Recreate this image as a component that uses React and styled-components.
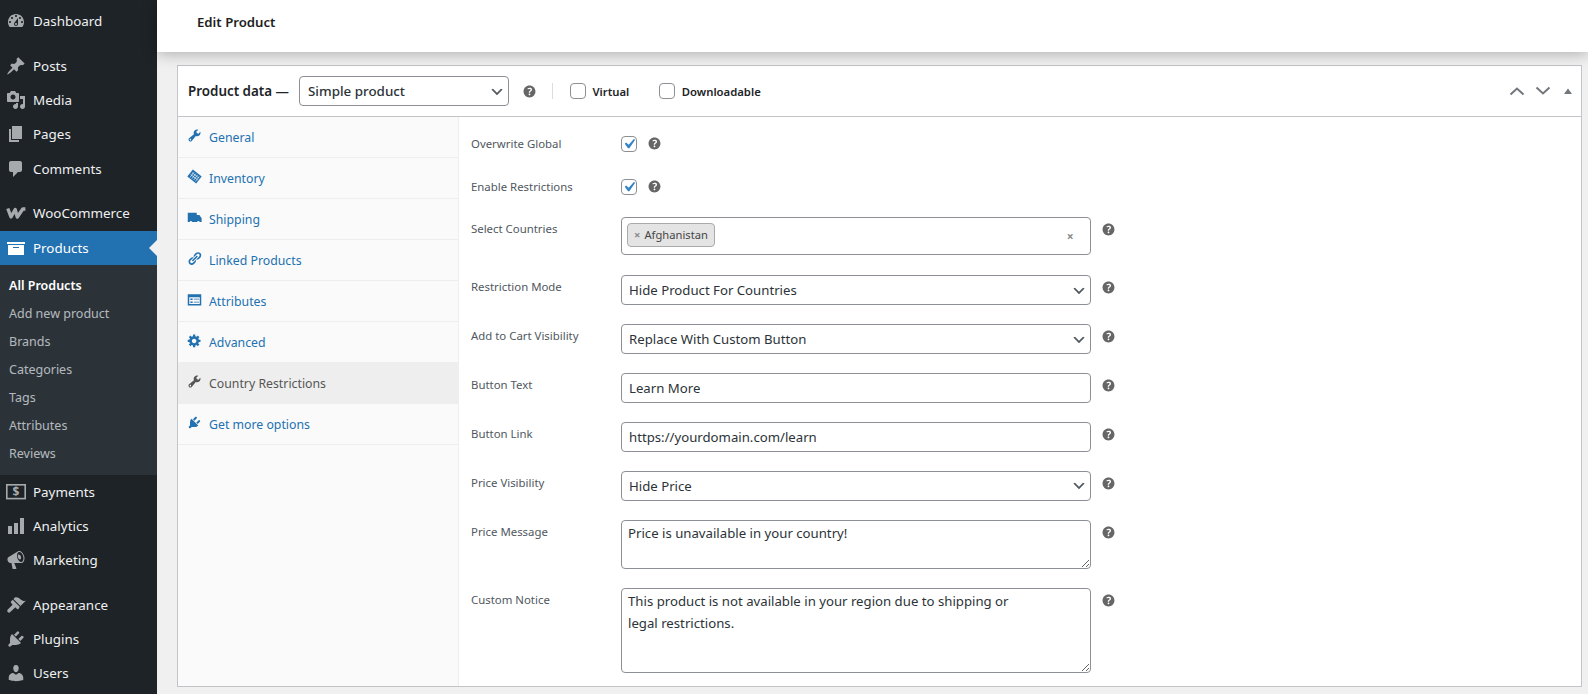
import styled, { createGlobalStyle } from "styled-components";

const GlobalStyle = createGlobalStyle`
  html, body {
    margin: 0;
    height: 100%;
    overflow: hidden;
    background: #f0f0f1;
    font-family: "Noto Sans", "Open Sans", sans-serif;
  }
  * {
    box-sizing: border-box;
  }
`;

const paths = {
  dashboard:
    "M3.76 16h12.48c1.1-1.37 1.76-3.11 1.76-5 0-4.42-3.58-8-8-8s-8 3.58-8 8c0 1.89.66 3.63 1.76 5zM10 4c.55 0 1 .45 1 1s-.45 1-1 1-1-.45-1-1 .45-1 1-1zM6 6c.55 0 1 .45 1 1s-.45 1-1 1-1-.45-1-1 .45-1 1-1zm8 0c.55 0 1 .45 1 1s-.45 1-1 1-1-.45-1-1 .45-1 1-1zm-5.37 5.55L12 7v6c0 1.1-.9 2-2 2s-2-.9-2-2c0-.57.24-1.08.63-1.45zM4 10c.55 0 1 .45 1 1s-.45 1-1 1-1-.45-1-1 .45-1 1-1zm12 0c.55 0 1 .45 1 1s-.45 1-1 1-1-.45-1-1 .45-1 1-1zm-5 3c0-.55-.45-1-1-1s-1 .45-1 1 .45 1 1 1 1-.45 1-1z",
  post: "M10.44 3.02l1.82-1.82 6.36 6.35-1.83 1.82c-1.05-.68-2.48-.57-3.41.36l-.75.75c-.92.93-1.04 2.35-.35 3.41l-1.83 1.82-2.41-2.41-2.8 2.79c-.42.42-3.38 2.71-3.8 2.29s1.86-3.39 2.28-3.81l2.79-2.79L4.1 9.36l1.83-1.82c1.05.69 2.48.57 3.4-.36l.75-.75c.93-.92 1.05-2.35.36-3.41z",
  media:
    "M13 11V4c0-.55-.45-1-1-1h-1.67L9 1H5L3.67 3H2c-.55 0-1 .45-1 1v7c0 .55.45 1 1 1h10c.55 0 1-.45 1-1zM7 4.5c1.38 0 2.5 1.12 2.5 2.5S8.38 9.5 7 9.5 4.5 8.38 4.5 7 5.62 4.5 7 4.5zM14 6h5v10.5c0 1.38-1.12 2.5-2.5 2.5S14 17.88 14 16.5s1.12-2.5 2.5-2.5c.17 0 .34.02.5.05V9h-3V6zm-4 8.05V13h2v3.5c0 1.38-1.12 2.5-2.5 2.5S7 17.88 7 16.5 8.12 14 9.5 14c.17 0 .34.02.5.05z",
  page: "M6 15V2h10v13H6zm-1 1h8v2H3V5h2v11z",
  comments: "M5 2h9c1.1 0 2 .9 2 2v7c0 1.1-.9 2-2 2h-2l-5 5v-5H5c-1.1 0-2-.9-2-2V4c0-1.1.9-2 2-2z",
  archive: "M19 4v2H1V4h18zM2 7h16v10H2V7zm11 3V9H7v1h6z",
  analytics: "M18 18V2h-4v16h4zm-6 0V7H8v11h4zm-6 0v-8H2v8h4z",
  megaphone:
    "M18.15 5.94c.46 1.62.38 3.22-.02 4.48-.42 1.28-1.26 2.18-2.3 2.48-.16.06-.26.06-.4.06-.06.02-.12.02-.18.02-.06.02-.14.02-.22.02h-6.8l2.22 5.5c.02.14-.06.26-.14.34-.08.1-.24.16-.34.16H6.95c-.1 0-.26-.06-.34-.16-.08-.08-.16-.2-.14-.34l-1-5.5H4.25l-.02-.02c-.5.06-1.08-.18-1.54-.62s-.88-1.08-1.06-1.88c-.24-.8-.2-1.56-.02-2.2.18-.62.58-1.08 1.06-1.3l.02-.02 9-5.4c.1-.06.18-.1.24-.16.06-.04.14-.08.24-.12.16-.08.28-.12.5-.18 1.04-.3 2.24.1 3.22 1.04.98.96 1.76 2.3 2.2 3.86zm-2.58 5.98h-.02c.4-.1.74-.34 1.04-.7.58-.7.86-1.76.86-3.04 0-.64-.1-1.3-.28-1.98-.34-1.36-1.02-2.5-1.78-3.24s-1.68-1.1-2.46-.88c-.82.22-1.4.96-1.7 2-.32 1.04-.28 2.36.06 3.72.38 1.36 1 2.5 1.8 3.24.78.74 1.62 1.1 2.48.88zm-2.54-7.08c.22-.04.42-.02.62.04.38.16.76.48 1.02 1s.42 1.2.42 1.78c0 .3-.04.56-.12.8-.18.48-.44.84-.86.94-.34.1-.8-.06-1.14-.4-.44-.44-.8-1.1-1-1.86-.2-.78-.2-1.5-.04-2.06.16-.54.5-.84.86-.94z",
  appearance:
    "M14.48 11.06L7.41 3.99l1.5-1.5c.5-.56 2.3-.47 3.51.32 1.21.8 1.43 1.28 2.91 2.1 1.18.64 2.45 1.26 4.45.85zM13.77 11.77L6.7 4.7 5 6.4c-.4.4-.4 1 0 1.4l1.1 1.1c.4.4.4 1 0 1.4L1.8 14.6c-.7.7-.7 1.8 0 2.5s1.8.7 2.5 0l4.3-4.2c.4-.4 1-.4 1.4 0l1.1 1c.4.4 1 .4 1.4 0z",
  plugins:
    "M13.11 4.36L9.87 7.6 8 5.73l3.24-3.24c.35-.34 1.05-.2 1.56.32.52.51.66 1.21.31 1.55zm-8 1.77l.91-1.12 9.01 9.01-1.19.84c-.71.71-2.63 1.16-3.82 1.16H6.14L4.9 17.26c-.59.59-1.54.59-2.12 0-.59-.58-.59-1.53 0-2.12l1.24-1.24v-3.88c0-1.13.4-3.19 1.09-3.89zm7.26 3.97l3.24-3.24c.34-.35 1.04-.21 1.55.31.52.51.66 1.21.31 1.55l-3.24 3.25z",
  users:
    "M10 9.25c-2.27 0-2.73-3.44-2.73-3.44C7 4.02 7.82 2 9.97 2c2.16 0 2.98 2.02 2.71 3.81 0 0-.41 3.44-2.68 3.44zm0 2.57L12.72 10c2.39 0 4.52 2.33 4.52 4.53v2.49s-3.65 1.13-7.24 1.13c-3.65 0-7.24-1.13-7.24-1.13v-2.49c0-2.25 1.94-4.48 4.47-4.48z",
  wrench:
    "M16.68 9.77c-1.34 1.34-3.3 1.67-4.95.99l-5.41 6.52c-.99.99-2.59.99-3.58 0s-.99-2.59 0-3.57l6.52-5.42c-.68-1.65-.35-3.61.99-4.95 1.28-1.28 3.12-1.62 4.72-1.06l-2.89 2.89 2.82 2.82 2.86-2.87c.53 1.58.18 3.39-1.08 4.65zM3.81 16.21c.4.39 1.04.39 1.43 0 .4-.4.4-1.04 0-1.43-.39-.4-1.03-.4-1.43 0-.39.39-.39 1.03 0 1.43z",
  links:
    "M17.74 2.76c1.68 1.69 1.68 4.41 0 6.1l-1.53 1.52c-1.12 1.12-2.7 1.47-4.14 1.09l2.62-2.61.76-.77.76-.76c.84-.84.84-2.2 0-3.04-.84-.85-2.2-.85-3.04 0l-.77.76-3.38 3.38c-.37-1.44-.02-3.02 1.1-4.14l1.52-1.53c1.69-1.68 4.42-1.68 6.1 0zM8.59 13.43l5.34-5.34c.42-.42.42-1.1 0-1.52-.44-.43-1.13-.39-1.53 0l-5.33 5.34c-.42.42-.42 1.1 0 1.52.44.43 1.13.39 1.52 0zm-.76 2.29l4.14-4.15c.38 1.44.03 3.02-1.09 4.14l-1.52 1.53c-1.69 1.68-4.41 1.68-6.1 0-1.68-1.68-1.68-4.42 0-6.1l1.53-1.52c1.12-1.12 2.7-1.47 4.14-1.1l-4.14 4.15c-.85.84-.85 2.2 0 3.05.84.84 2.2.84 3.04 0z",
  gear: "M18 12h-2.18c-.17.7-.44 1.35-.81 1.93l1.54 1.54-2.1 2.1-1.54-1.54c-.58.36-1.23.63-1.91.79V19H8v-2.18c-.68-.16-1.33-.43-1.91-.79l-1.54 1.54-2.12-2.12 1.54-1.54c-.36-.58-.63-1.23-.79-1.91H1V9.03h2.17c.16-.7.44-1.35.8-1.94L2.43 5.55l2.1-2.1 1.54 1.54c.58-.37 1.24-.64 1.93-.81V2h3v2.18c.68.16 1.33.43 1.91.79l1.54-1.54 2.12 2.12-1.54 1.54c.36.59.64 1.24.8 1.94H18V12zm-8.5 1.5c1.66 0 3-1.34 3-3s-1.34-3-3-3-3 1.34-3 3 1.34 3 3 3z",
  truck: "M1 3.5h12v3h3.5l3 4.5v5H17a1.8 1.8 0 0 0-3.5 0H7a1.8 1.8 0 0 0-3.5 0H1z",
  help: "M17 10c0-3.87-3.14-7-7-7-3.87 0-7 3.13-7 7 0 3.86 3.13 7 7 7 3.86 0 7-3.14 7-7zm-6.3 1.48H9.14v-.43c0-.38.08-.7.24-.98s.46-.57.88-.89c.41-.29.68-.53.81-.71.14-.18.2-.39.2-.62 0-.25-.09-.44-.28-.58-.19-.13-.45-.19-.79-.19-.58 0-1.25.19-2 .57l-.64-1.28c.87-.49 1.8-.74 2.77-.74.81 0 1.45.2 1.92.58.48.39.71.91.71 1.55 0 .43-.09.8-.29 1.11-.19.32-.57.67-1.11 1.06-.38.28-.61.49-.71.63-.1.15-.15.34-.15.57v.35zm-1.47 2.74c-.18-.17-.27-.42-.27-.73 0-.33.08-.58.26-.75s.43-.25.77-.25c.32 0 .57.09.75.26s.27.42.27.74c0 .3-.09.55-.27.72-.18.18-.43.27-.75.27-.33 0-.58-.09-.76-.26z",
};

const Icon = ({ name, size = 20, className }) => (
  <svg className={className} width={size} height={size} viewBox="0 0 20 20" fill="currentColor">
    <path d={paths[name]} fillRule="evenodd" />
  </svg>
);

const WooLogo = () => (
  <svg width="20" height="20" viewBox="0 0 20 20" fill="none" stroke="currentColor" strokeWidth="3.4" strokeLinejoin="round">
    <path d="M1.8 5.5 L5 14 L9.2 6.5 L11.3 14 L16.8 6 L19.4 6" />
  </svg>
);

const PaymentsLogo = () => (
  <svg width="20" height="20" viewBox="0 0 20 20">
    <rect x="0.8" y="2.8" width="18.4" height="13.8" fill="none" stroke="currentColor" strokeWidth="1.6" />
    <text x="10" y="14" textAnchor="middle" fontSize="12" fontWeight="700" fill="currentColor" fontFamily="Noto Sans, sans-serif">
      $
    </text>
  </svg>
);

const InventoryLogo = () => (
  <svg width="20" height="20" viewBox="0 0 20 20">
    <g transform="rotate(38 10 10)">
      <rect x="2.5" y="4" width="15" height="12" fill="currentColor" />
      <path d="M6 6v8.5M9 6v8.5M12 6v8.5M15 6v8.5M4 8h12M4 11h12" stroke="#fafafa" strokeWidth="0.8" />
    </g>
  </svg>
);

const AttributesLogo = () => (
  <svg width="20" height="20" viewBox="0 0 20 20">
    <rect x="1" y="3" width="18" height="15" fill="currentColor" />
    <path d="M3 7h14v9H3z" fill="#fafafa" />
    <path d="M4.5 8.5h3v2h-3zM4.5 12.5h3v2h-3zM9 9h7v1H9zM9 13h7v1H9z" fill="currentColor" />
  </svg>
);

const Page = styled.div`
  display: flex;
  height: 694px;
  overflow: hidden;
`;

const Sidebar = styled.nav`
  flex: 0 0 157px;
  background: #1d2327;
  padding-top: 4px;
`;

const MenuItem = styled.div`
  position: relative;
  display: flex;
  align-items: center;
  height: 34.2px;
  margin-top: ${(p) => (p.$spaced ? "10.7px" : "0")};
  padding-left: 5.5px;
  gap: 7.5px;
  font-size: 13.4px;
  color: ${(p) => (p.$active ? "#fff" : "#f0f0f1")};
  background: ${(p) => (p.$active ? "#2271b1" : "transparent")};
`;

const MenuIcon = styled.span`
  display: flex;
  color: ${(p) => (p.$active ? "#fff" : "#a7aaad")};
`;

const ActiveArrow = styled.span`
  position: absolute;
  right: 0;
  top: 9px;
  border: 8px solid transparent;
  border-right-color: #f0f0f1;
  border-left-width: 0;
`;

const SubMenu = styled.div`
  background: #2c3338;
  padding: 7.5px 0 6.5px;
`;

const SubItem = styled.div`
  height: 28px;
  line-height: 28px;
  padding-left: 9px;
  font-size: 12.5px;
  font-weight: ${(p) => (p.$current ? 600 : 400)};
  color: ${(p) => (p.$current ? "#fff" : "rgba(240, 246, 252, 0.7)")};
`;

const Main = styled.main`
  flex: 1;
  min-width: 0;
  display: flex;
  flex-direction: column;
`;

const TopBar = styled.header`
  position: relative;
  z-index: 2;
  flex: 0 0 52px;
  display: flex;
  align-items: center;
  padding: 0 0 8px 40px;
  background: #fff;
  box-shadow: 0 2px 14px rgba(0, 0, 0, 0.28);
  font-size: 13.2px;
  font-weight: 600;
  color: #1e1e1e;
`;

const Box = styled.section`
  margin: 13px 6px 0 20px;
  height: 622px;
  background: #fff;
  border: 1px solid #c3c4c7;
  display: flex;
  flex-direction: column;
`;

const BoxHeader = styled.div`
  flex: 0 0 51px;
  display: flex;
  align-items: center;
  padding-left: 10px;
  border-bottom: 1px solid #c3c4c7;
`;

const BoxTitle = styled.span`
  font-size: 13.4px;
  font-weight: 600;
  color: #1d2327;
  margin-right: 10px;
`;

const chevron = `url("data:image/svg+xml,%3Csvg xmlns='http://www.w3.org/2000/svg' width='20' height='20' viewBox='0 0 20 20'%3E%3Cpath d='M5 6l5 5 5-5 2 1-7 7-7-7 2-1z' fill='%2350575e'/%3E%3C/svg%3E")`;

const Select = styled.select`
  appearance: none;
  display: block;
  width: ${(p) => p.$width || "469.5px"};
  height: 30px;
  padding: 0 24px 0 ${(p) => p.$pad || "7px"};
  border: 1px solid #8c8f94;
  border-radius: 4px;
  background: #fff ${chevron} no-repeat right 3px top 55%;
  background-size: 16px 16px;
  font-family: inherit;
  font-size: ${(p) => p.$size || "13.2px"};
  font-weight: ${(p) => p.$weight || 400};
  color: #2c3338;
`;

const HelpIcon = styled(Icon)`
  flex: none;
  display: block;
  color: #666;
`;

const HeaderHelp = styled.span`
  display: flex;
  margin-left: 12px;
`;

const Divider = styled.span`
  width: 1px;
  height: 16px;
  background: #ddd;
  margin: 0 17px 0 14px;
`;

const CheckLabel = styled.label`
  display: flex;
  align-items: center;
  gap: 6.5px;
  margin-right: 30px;
  font-size: 11.3px;
  font-weight: 600;
  color: #1d2327;
`;

const Checkbox = styled.input.attrs({ type: "checkbox", readOnly: true })`
  appearance: none;
  flex: none;
  display: block;
  width: 16px;
  height: 16px;
  margin: 0;
  border: 1px solid #8c8f94;
  border-radius: 4px;
  background: #fff no-repeat center / 20px 20px;
  &:checked {
    background-image: url("data:image/svg+xml,%3Csvg xmlns='http://www.w3.org/2000/svg' viewBox='0 0 20 20'%3E%3Cpath d='M14.83 4.89l1.34.94-5.81 8.38H9.02L5.78 9.67l1.34-1.25 2.57 2.4z' fill='%233582c4'/%3E%3C/svg%3E");
  }
`;

const Handles = styled.div`
  margin-left: auto;
  display: flex;
  align-items: center;
  gap: 9.3px;
  padding-right: 5px;
  color: #72777c;
`;

const Body = styled.div`
  flex: 1;
  display: flex;
  min-height: 0;
`;

const Tabs = styled.ul`
  flex: 0 0 281px;
  margin: 0;
  padding: 0;
  list-style: none;
  background: #fafafa;
  border-right: 1px solid #eee;
`;

const Tab = styled.li`
  display: flex;
  align-items: center;
  gap: 7px;
  height: 41px;
  padding-left: 9px;
  border-bottom: 1px solid #eee;
  font-size: 12.3px;
  color: ${(p) => (p.$active ? "#555" : "#2271b1")};
  background: ${(p) => (p.$active ? "#eee" : "transparent")};
`;

const TabIcon = styled.span`
  display: flex;
  width: 15px;
  margin-top: -3px;
  svg {
    width: 15px;
    height: 15px;
  }
`;

const Panel = styled.div`
  flex: 1;
  padding: 5.2px 0 0 12px;
`;

const Field = styled.div`
  display: flex;
  align-items: flex-start;
  padding: 9.45px 0;
`;

const FieldLabel = styled.label`
  flex: 0 0 150px;
  font-size: 11.4px;
  line-height: 24px;
  color: #50575e;
`;

const CheckSlot = styled.div`
  display: flex;
  align-items: center;
  height: 24px;
`;

const CheckHelp = styled(HelpIcon)`
  margin-left: 8.5px;
`;

const ControlHelp = styled(HelpIcon)`
  margin-left: 9px;
  margin-top: ${(p) => p.$top || "4px"};
`;

const MultiBox = styled.div`
  display: flex;
  align-items: center;
  justify-content: space-between;
  width: 469.5px;
  height: 38px;
  margin-bottom: 1px;
  padding: 0 16px 0 5px;
  border: 1px solid #8c8f94;
  border-radius: 4px;
  background: #fff;
`;

const Chip = styled.span`
  display: flex;
  align-items: center;
  gap: 4px;
  height: 24px;
  margin-top: -3px;
  padding: 0 6px;
  border: 1px solid #aaa;
  border-radius: 4px;
  background: #e4e4e4;
  font-size: 11.2px;
  color: #444;
`;

const ChipClose = styled.span`
  color: #888;
  font-weight: 700;
`;

const ClearButton = styled.span`
  color: #888;
  font-size: 12px;
  font-weight: 700;
`;

const TextInput = styled.input`
  display: block;
  width: 469.5px;
  height: 30px;
  padding: 0 7px;
  border: 1px solid #8c8f94;
  border-radius: 4px;
  background: #fff;
  font-family: inherit;
  font-size: 13.2px;
  color: #2c3338;
`;

const TextArea = styled.textarea`
  display: block;
  width: 469.5px;
  height: ${(p) => p.$height};
  padding: 1px 6px;
  border: 1px solid #8c8f94;
  border-radius: 4px;
  background: #fff;
  font-family: inherit;
  font-size: 13.2px;
  line-height: 22px;
  color: #2c3338;
`;

const sideTop = [
  { label: "Dashboard", icon: "dashboard" },
  { label: "Posts", icon: "post", spaced: true },
  { label: "Media", icon: "media" },
  { label: "Pages", icon: "page" },
  { label: "Comments", icon: "comments" },
  { label: "WooCommerce", logo: <WooLogo />, spaced: true },
];

const sideBottom = [
  { label: "Payments", logo: <PaymentsLogo /> },
  { label: "Analytics", icon: "analytics" },
  { label: "Marketing", icon: "megaphone" },
  { label: "Appearance", icon: "appearance", spaced: true },
  { label: "Plugins", icon: "plugins" },
  { label: "Users", icon: "users" },
];

const subItems = ["All Products", "Add new product", "Brands", "Categories", "Tags", "Attributes", "Reviews"];

const tabs = [
  { label: "General", icon: <Icon name="wrench" /> },
  { label: "Inventory", icon: <InventoryLogo /> },
  { label: "Shipping", icon: <Icon name="truck" /> },
  { label: "Linked Products", icon: <Icon name="links" /> },
  { label: "Attributes", icon: <AttributesLogo /> },
  { label: "Advanced", icon: <Icon name="gear" /> },
  { label: "Country Restrictions", icon: <Icon name="wrench" />, active: true },
  { label: "Get more options", icon: <Icon name="plugins" /> },
];

const SideRow = ({ item }) => (
  <MenuItem $spaced={item.spaced}>
    <MenuIcon>{item.logo || <Icon name={item.icon} />}</MenuIcon>
    {item.label}
  </MenuItem>
);

const App = () => {
  return (
    <Page>
      <GlobalStyle />
      <Sidebar>
        {sideTop.map((item) => (
          <SideRow key={item.label} item={item} />
        ))}
        <MenuItem $active>
          <MenuIcon $active>
            <Icon name="archive" />
          </MenuIcon>
          Products
          <ActiveArrow />
        </MenuItem>
        <SubMenu>
          {subItems.map((label, i) => (
            <SubItem key={label} $current={i === 0}>
              {label}
            </SubItem>
          ))}
        </SubMenu>
        {sideBottom.map((item) => (
          <SideRow key={item.label} item={item} />
        ))}
      </Sidebar>
      <Main>
        <TopBar>Edit Product</TopBar>
        <Box>
          <BoxHeader>
            <BoxTitle>Product data —</BoxTitle>
            <Select $width="210px" $weight={500} $size="13.4px" $pad="8px" defaultValue="simple">
              <option value="simple">Simple product</option>
            </Select>
            <HeaderHelp>
              <HelpIcon name="help" size={17} />
            </HeaderHelp>
            <Divider />
            <CheckLabel>
              <Checkbox />
              Virtual
            </CheckLabel>
            <CheckLabel>
              <Checkbox />
              Downloadable
            </CheckLabel>
            <Handles>
              <svg width="16" height="10" viewBox="0 0 16 10" fill="none" stroke="currentColor" strokeWidth="2">
                <path d="M1.5 8.5 8 2.5l6.5 6" />
              </svg>
              <svg width="16" height="10" viewBox="0 0 16 10" fill="none" stroke="currentColor" strokeWidth="2">
                <path d="M1.5 1.5 8 7.5l6.5-6" />
              </svg>
              <svg width="16" height="10" viewBox="0 0 16 10" fill="currentColor">
                <path d="M4 8 8 2.5l4 5.5z" />
              </svg>
            </Handles>
          </BoxHeader>
          <Body>
            <Tabs>
              {tabs.map((tab) => (
                <Tab key={tab.label} $active={tab.active}>
                  <TabIcon>{tab.icon}</TabIcon>
                  {tab.label}
                </Tab>
              ))}
            </Tabs>
            <Panel>
              <Field>
                <FieldLabel>Overwrite Global</FieldLabel>
                <CheckSlot>
                  <Checkbox defaultChecked />
                  <CheckHelp name="help" size={17} />
                </CheckSlot>
              </Field>
              <Field>
                <FieldLabel>Enable Restrictions</FieldLabel>
                <CheckSlot>
                  <Checkbox defaultChecked />
                  <CheckHelp name="help" size={17} />
                </CheckSlot>
              </Field>
              <Field>
                <FieldLabel>Select Countries</FieldLabel>
                <MultiBox>
                  <Chip>
                    <ChipClose>×</ChipClose>
                    Afghanistan
                  </Chip>
                  <ClearButton>×</ClearButton>
                </MultiBox>
                <ControlHelp name="help" size={17} />
              </Field>
              <Field>
                <FieldLabel>Restriction Mode</FieldLabel>
                <Select defaultValue="hide">
                  <option value="hide">Hide Product For Countries</option>
                </Select>
                <ControlHelp name="help" size={17} />
              </Field>
              <Field>
                <FieldLabel>Add to Cart Visibility</FieldLabel>
                <Select defaultValue="replace">
                  <option value="replace">Replace With Custom Button</option>
                </Select>
                <ControlHelp name="help" size={17} />
              </Field>
              <Field>
                <FieldLabel>Button Text</FieldLabel>
                <TextInput defaultValue="Learn More" />
                <ControlHelp name="help" size={17} />
              </Field>
              <Field>
                <FieldLabel>Button Link</FieldLabel>
                <TextInput defaultValue="https://yourdomain.com/learn" />
                <ControlHelp name="help" size={17} />
              </Field>
              <Field>
                <FieldLabel>Price Visibility</FieldLabel>
                <Select defaultValue="hide">
                  <option value="hide">Hide Price</option>
                </Select>
                <ControlHelp name="help" size={17} />
              </Field>
              <Field>
                <FieldLabel>Price Message</FieldLabel>
                <TextArea $height="49px" defaultValue="Price is unavailable in your country!" />
                <ControlHelp name="help" size={17} />
              </Field>
              <Field>
                <FieldLabel>Custom Notice</FieldLabel>
                <TextArea
                  $height="85.5px"
                  defaultValue={"This product is not available in your region due to shipping or\nlegal restrictions."}
                />
                <ControlHelp name="help" size={17} />
              </Field>
            </Panel>
          </Body>
        </Box>
      </Main>
    </Page>
  );
};

export default App;
